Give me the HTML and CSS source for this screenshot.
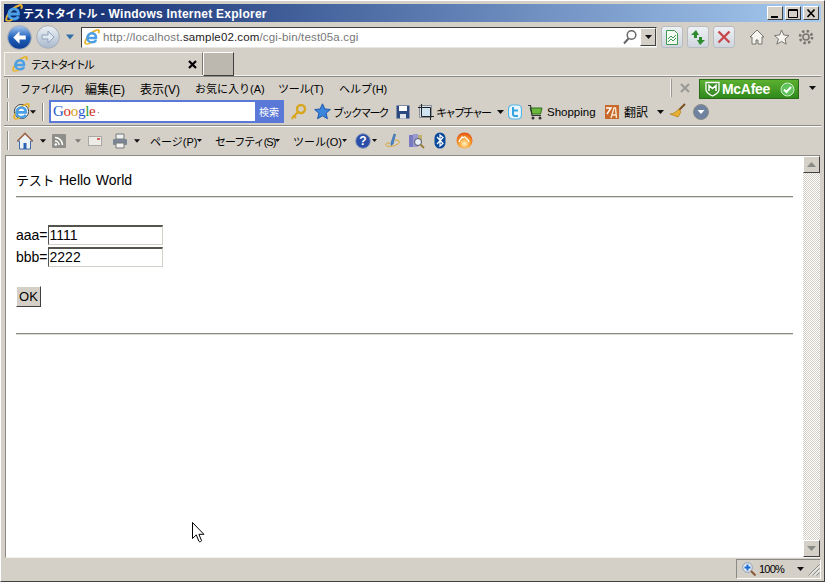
FILE: index.html
```html
<!DOCTYPE html>
<html lang="ja">
<head>
<meta charset="utf-8">
<title>テストタイトル</title>
<link rel="stylesheet" href="styles.css">
</head>
<body>
<svg class="defs" width="0" height="0">
  <defs>
    <symbol id="ie" viewBox="0 0 18 18">
      <path d="M1.500 16.500C.2 14 5 4 14.500 1.200c2.500-.6 3 1.200 1.600 3.600" fill="none" stroke="#e8b430" stroke-width="2"/>
      <path d="M4 10h9.500C13.700 6.500 11.500 4.800 9 4.800 6 4.800 3.800 7 3.800 10c0 3 2.200 5 5.200 5 2.200 0 3.800-1 4.500-2.600" fill="none" stroke="#4a9fe6" stroke-width="2.800"/>
      <path d="M1 16c1.500 1.500 4 1 6.500-.5" fill="none" stroke="#e8b430" stroke-width="1.600"/>
    </symbol>
    <symbol id="tri" viewBox="0 0 7 4"><path d="M0 0h7L3.500 4z" fill="#111"/></symbol>
  </defs>
</svg>
<div class="window">
  <header class="titlebar">
    <svg class="title-ie"><use href="#ie"/></svg>
    <span class="title-text"><span class="title-jp">テストタイトル</span> - Windows Internet Explorer</span>
    <div class="winbtns">
      <span class="winbtn"><svg width="15" height="13"><rect x="3" y="9" width="7" height="2" fill="#000"/></svg></span>
      <span class="winbtn"><svg width="15" height="13"><path d="M2.500 2.500h9v8h-9zM2 3.500h10" fill="none" stroke="#000"/></svg></span>
      <span class="winbtn"><svg width="15" height="13"><path d="M3.500 2.500l7 7.500M10.500 2.500l-7 7.500" stroke="#000" stroke-width="1.700"/></svg></span>
    </div>
  </header>

  <nav class="navrow">
    <div class="navcluster">
      <svg class="back" viewBox="0 0 24 24"><defs><linearGradient id="bk" x1="0" y1="0" x2="0" y2="1"><stop offset="0" stop-color="#a6c8f0"/><stop offset=".5" stop-color="#2062bc"/><stop offset="1" stop-color="#0c3a90"/></linearGradient></defs><circle cx="12" cy="12" r="11.300" fill="url(#bk)" stroke="#a8aeb8"/><path d="M12 6l-6 6 6 6v-4h6v-4h-6z" fill="#fff"/></svg>
      <svg class="forward" viewBox="0 0 24 24"><defs><linearGradient id="fw" x1="0" y1="0" x2="0" y2="1"><stop offset="0" stop-color="#eef2f6"/><stop offset="1" stop-color="#a8b8cc"/></linearGradient></defs><circle cx="12" cy="12" r="11.300" fill="url(#fw)" stroke="#a8aeb8"/><path d="M12 6l6 6-6 6v-4H6v-4h6z" fill="#dfe7f0" stroke="#8fa3bc"/></svg>
      <svg class="nav-drop" viewBox="0 0 10 7"><path d="M0 .5h10L5 6.500z" fill="#2f6ea8"/></svg>
    </div>
    <div class="address">
      <svg class="addr-ie"><use href="#ie"/></svg>
      <span class="url"><span class="dim">http://localhost</span>.sample02.com<span class="dim">/cgi-bin/test05a.cgi</span></span>
      <svg class="search-glass" viewBox="0 0 16 16"><circle cx="9.500" cy="6" r="4.300" fill="none" stroke="#666" stroke-width="1.500"/><path d="M6.500 9.500L2 14.500" stroke="#666" stroke-width="2"/></svg>
      <span class="addr-drop"><svg class="tri"><use href="#tri"/></svg></span>
    </div>
    <span class="navbtn"><svg width="16" height="17" viewBox="0 0 16 17"><path d="M2.500 1.500h8l3 3v11h-11z" fill="#f4fbf2" stroke="#3d9a50"/><path d="M4 10l3-3 2 2 3-3M4 13l3-3 2 2 3-3" fill="none" stroke="#3d9a50"/></svg></span>
    <span class="navbtn"><svg width="18" height="17" viewBox="0 0 18 17"><path d="M7 1L2 6h3v3h3V6h2zM11 16l5-5h-3V8h-3v3H8z" fill="#2e8a2e"/></svg></span>
    <span class="navbtn"><svg width="16" height="16" viewBox="0 0 16 16"><path d="M2.500 2.500l11 11M13.500 2.500l-11 11" stroke="#c8484c" stroke-width="2.400"/></svg></span>
    <div class="ie9tools">
      <svg width="16" height="16" viewBox="0 0 16 16"><path d="M8 1L1 8h2v7h4v-4h2v4h4V8h2z" fill="#f6f4ee" stroke="#77756e"/></svg>
      <svg width="17" height="16" viewBox="0 0 17 16"><path d="M8.500 1l2.300 5 5.200.5-4 3.500 1.200 5.200-4.700-2.800-4.700 2.800L5.500 10l-4-3.500L6.700 6z" fill="#f6f4ee" stroke="#77756e"/></svg>
      <svg width="16" height="16" viewBox="0 0 16 16"><circle cx="8" cy="8" r="3" fill="none" stroke="#77756e" stroke-width="1.500"/><circle cx="8" cy="8" r="6" fill="none" stroke="#77756e" stroke-width="2.600" stroke-dasharray="2.400 2.300"/></svg>
    </div>
  </nav>

  <div class="tabrow">
    <div class="tab">
      <svg class="tab-ie"><use href="#ie"/></svg>
      <span class="tab-title">テストタイトル</span>
      <svg class="tab-close" viewBox="0 0 9 9"><path d="M1 1l7 7M8 1L1 8" stroke="#000" stroke-width="2.200"/></svg>
    </div>
    <div class="newtab"></div>
  </div>

  <div class="bar menubar">
    <span class="grip"></span>
    <span class="item m-file">ファイル(F)</span>
    <span class="item m-edit">編集(E)</span>
    <span class="item m-view">表示(V)</span>
    <span class="item m-fav">お気に入り(A)</span>
    <span class="item m-tools">ツール(T)</span>
    <span class="item">ヘルプ(H)</span>
    <span class="spring"></span>
    <span class="grip grip-light"></span>
    <svg class="mc-x" viewBox="0 0 10 10"><path d="M1 1l8 8M9 1L1 9" stroke="#9a9a96" stroke-width="2.200"/></svg>
    <div class="mcafee">
      <svg width="15" height="16" viewBox="0 0 15 16"><path d="M1 1.500h13v7c0 3-3 5-6.500 6.500C4 13.500 1 11.500 1 8.500z" fill="#3f8f2a" stroke="#fff" stroke-width="1.300"/><path d="M4 10V4.500l3.500 3 3.500-3V10" fill="none" stroke="#fff" stroke-width="1.500"/></svg>
      <span class="mc-name">McAfee</span>
      <svg class="mc-check" width="15" height="15" viewBox="0 0 15 15"><circle cx="7.500" cy="7.500" r="6.500" fill="#5fc25a" stroke="#cfeec8"/><path d="M4 7.500l2.500 2.500L11 5" fill="none" stroke="#fff" stroke-width="2"/></svg>
    </div>
    <svg class="tri mc-drop"><use href="#tri"/></svg>
  </div>

  <div class="bar linkbar">
    <span class="grip"></span>
    <svg class="lb-ie" viewBox="0 0 18 18"><circle cx="9" cy="9" r="7.500" fill="#fff" stroke="#333"/><use href="#ie"/></svg>
    <svg class="tri tri-small"><use href="#tri"/></svg>
    <span class="sep"></span>
    <div class="google">
      <span class="g-input"><span class="g-word"><span class="gb">G</span><span class="gr">o</span><span class="gy">o</span><span class="gb">g</span><span class="gg">l</span><span class="gr">e</span></span><span class="g-dot">·</span></span>
      <span class="g-btn">検索</span>
    </div>
    <svg class="key" viewBox="0 0 17 17"><circle cx="11" cy="6" r="4" fill="none" stroke="#d8a61c" stroke-width="2.400"/><path d="M8 9l-6 6M4 13l2 2M2 15l1 1" stroke="#d8a61c" stroke-width="2.200"/></svg>
    <svg class="star" viewBox="0 0 17 17"><path d="M8.500 .8l2.300 5.200 5.500.5-4.200 3.700 1.300 5.500-4.900-2.900-4.900 2.900 1.300-5.500L.7 6.500 6.200 6z" fill="#3a86dc" stroke="#1c55a8"/></svg>
    <span class="item l-book">ブックマーク</span>
    <svg class="floppy" viewBox="0 0 14 14"><path d="M.5.500h13v13H.5z" fill="#2c4a80"/><path d="M3 1h8v5H3z" fill="#fff"/><path d="M4 9h6v4.500H4z" fill="#e0e4ea"/></svg>
    <svg class="capture" viewBox="0 0 16 16"><path d="M1.500 1.500h12v12h-12z" fill="#cfe3f2" stroke="#8a8f96"/><path d="M3.500 0v12.500H16M0 3.500h12.500V16" fill="none" stroke="#222"/></svg>
    <span class="item l-cap">キャプチャー</span>
    <svg class="tri"><use href="#tri"/></svg>
    <svg class="twitter" viewBox="0 0 14 16"><rect x=".5" y="1" width="13" height="14" rx="4" fill="#eaf6fc" stroke="#55b5e8" stroke-width="1.200"/><path d="M5 3v7c0 1.500 1 2 2 2h3M5 6.500h5" fill="none" stroke="#35a5e0" stroke-width="2"/></svg>
    <svg class="cart" viewBox="0 0 16 16"><path d="M2 4h12l-1.500 6H4z" fill="#6cb83c" stroke="#2e6e1a"/><path d="M0 1.500h2.500L4 11.500h9" fill="none" stroke="#333" stroke-width="1.200"/><circle cx="5" cy="14" r="1.500" fill="#333"/><circle cx="12" cy="14" r="1.500" fill="#333"/></svg>
    <span class="item l-shop">Shopping</span>
    <svg class="transl" viewBox="0 0 14 14"><rect width="14" height="14" fill="#c8682a"/><path d="M1 3h5L2 9" fill="none" stroke="#fff" stroke-width="1.400"/><path d="M6 13l3-10h1.500l1 10M7.500 10h4" fill="none" stroke="#fbe8d0" stroke-width="1.400"/></svg>
    <span class="item l-tr">翻訳</span>
    <svg class="tri"><use href="#tri"/></svg>
    <svg class="broom" viewBox="0 0 17 17"><path d="M16 1L9 8" stroke="#7a4a1c" stroke-width="1.800"/><path d="M10 6l2 3-3 5-8-3c3 0 6-2 9-5z" fill="#e8b030" stroke="#b07a18" stroke-width=".700"/></svg>
    <svg class="round" viewBox="0 0 16 16"><circle cx="8" cy="8" r="7.500" fill="#6f83a0" stroke="#8a8a88"/><path d="M4.500 6h7L8 10z" fill="#fff"/></svg>
  </div>

  <div class="bar cmdbar">
    <span class="grip"></span>
    <svg class="c-home" viewBox="0 0 18 18"><path d="M9 1L1 9h2.500v8h11V9H17z" fill="#eef3fa" stroke="#3f6aa8"/><path d="M1.500 9L9 1.500 16.500 9" fill="none" stroke="#a06a48" stroke-width="1.600"/><path d="M7.500 11h3v6h-3z" fill="#2f62b0"/></svg>
    <svg class="tri tri-home"><use href="#tri"/></svg>
    <svg class="c-rss" viewBox="0 0 14 14"><rect width="14" height="14" rx="1" fill="#8e8e8a"/><path d="M3 3.500c4 0 7.500 3.500 7.500 7.500M3 7c2.200 0 4 1.800 4 4" fill="none" stroke="#fff" stroke-width="1.500"/><circle cx="3.800" cy="10.500" r="1.300" fill="#fff"/></svg>
    <svg class="tri tri-rss"><use href="#tri"/></svg>
    <svg class="c-mail" viewBox="0 0 14 10"><rect x=".5" y=".5" width="13" height="9" fill="#eeece6" stroke="#aaa8a2"/><rect x="9" y="2" width="3" height="2" fill="#d86060"/></svg>
    <svg class="c-print" viewBox="0 0 16 16"><path d="M4 1h8v5H4z" fill="#eef0f2" stroke="#777"/><rect x="1" y="6" width="14" height="6" rx="1" fill="#7a8694"/><path d="M4 10h8v5H4z" fill="#f4f4f2" stroke="#777"/></svg>
    <svg class="tri tri-print"><use href="#tri"/></svg>
    <span class="item c-page">ページ(P)</span>
    <svg class="tri tri-tiny"><use href="#tri"/></svg>
    <span class="item c-safe">セーフティ(S)</span>
    <svg class="tri tri-tiny"><use href="#tri"/></svg>
    <span class="item c-tools">ツール(O)</span>
    <svg class="tri tri-tiny"><use href="#tri"/></svg>
    <svg class="c-help" viewBox="0 0 16 16"><circle cx="8" cy="8" r="7.300" fill="#2b4fa8" stroke="#8a9ab8"/><text x="8" y="12" class="help-q">?</text></svg>
    <svg class="tri tri-help"><use href="#tri"/></svg>
    <svg class="c-pen" viewBox="0 0 16 16"><path d="M9 1l1.500.5L8 11l-2 1.500V10z" fill="#4a8ad0" stroke="#2a5a9a" stroke-width=".600"/><path d="M10 7c4 0 6 2 3 4-3 2-8 3-11 2s-1-3 3-3" fill="none" stroke="#d8a838"/></svg>
    <svg class="c-research" viewBox="0 0 17 17"><rect x="1" y="3" width="4" height="12" fill="#7a7ac0"/><rect x="5" y="2" width="5" height="13" fill="#9a9ad0"/><rect x="10" y="3" width="4" height="6" fill="#c0b070"/><circle cx="10" cy="10" r="3.500" fill="#e8f0f8" stroke="#556"/><path d="M12.500 12.500L16 16" stroke="#a08040" stroke-width="2"/></svg>
    <svg class="c-bt" viewBox="0 0 12 17"><rect x=".5" y=".5" width="11" height="16" rx="5.500" fill="#0a4a9a"/><path d="M3 5l6 6.500-3 2.500V3l3 2.500L3 12" fill="none" stroke="#fff" stroke-width="1.200"/></svg>
    <svg class="c-flame" viewBox="0 0 17 17"><defs><radialGradient id="fl" cx=".5" cy=".7" r=".7"><stop offset="0" stop-color="#fff4c0"/><stop offset=".5" stop-color="#f8a030"/><stop offset="1" stop-color="#e04a10"/></radialGradient></defs><circle cx="8.500" cy="8.500" r="8" fill="url(#fl)"/><path d="M3 10c1-4 2-2 3-5 1 2 2-1 3 0 1 2 3 1 4 5" fill="none" stroke="#fff" stroke-width="1.200"/></svg>
  </div>

  <main class="viewport">
    <div class="page">
      <div class="heading"><span class="jp-big">テスト</span> Hello World</div>
      <hr class="rule">
      <div class="field"><label>aaa=</label><input class="input" value="1111"></div>
      <div class="field"><label>bbb=</label><input class="input" value="2222"></div>
      <button class="okbtn">OK</button>
      <hr class="rule rule-end">
      <svg class="pointer" width="14" height="21" viewBox="0 0 14 21"><path d="M.5.500v16l3.800-3.600 2.600 6.400c.4 1 3 .3 2.500-1l-2.500-6h5z" fill="#fff" stroke="#000"/></svg>
    </div>
    <div class="scrollbar">
      <span class="sb-btn"><svg width="9" height="5"><path d="M0 5h9L4.500 0z" fill="#8a8a86"/></svg></span>
      <span class="sb-track"></span>
      <span class="sb-btn"><svg width="9" height="5"><path d="M0 0h9L4.500 5z" fill="#8a8a86"/></svg></span>
    </div>
  </main>

  <footer class="status">
    <div class="zoombox">
      <svg class="z-glass" viewBox="0 0 14 14"><circle cx="5.500" cy="5.500" r="4.800" fill="#e8eef6" stroke="#8a9ab0"/><path d="M5.500 2.500v6M2.500 5.500h6" stroke="#1a6ad0" stroke-width="2"/><path d="M9 9l4.500 4.500" stroke="#8a5a38" stroke-width="2"/></svg>
      <span class="z-text">100%</span>
      <svg class="tri z-tri"><use href="#tri"/></svg>
      <svg class="resize" width="13" height="13" viewBox="0 0 13 13"><path d="M12.500 1.500l-11 11M12.500 5.500l-7 7M12.500 9.500l-3 3" stroke="#8a8a86"/><path d="M12.500 3l-9.500 9.500M12.500 7l-5.500 5.500" stroke="#fff"/></svg>
    </div>
  </footer>
</div>
</body>
</html>
```

FILE: styles.css
```css
* { box-sizing: border-box; }
html, body { margin: 0; padding: 0; }
body { width: 825px; height: 582px; overflow: hidden; background: #d4d0c8; }
.defs { position: absolute; }
svg { display: block; flex: none; }

.window {
  width: 825px;
  height: 582px;
  display: flex;
  flex-direction: column;
  background: #d4d0c8;
  border-top: 1px solid #fff;
  border-left: 1px solid #fff;
  border-right: 1px solid #404040;
  border-bottom: 1px solid #404040;
  padding: 3px;
  font-family: "Liberation Sans", "Noto Sans CJK JP", sans-serif;
  font-size: 11px;
  color: #000;
}

/* title bar */
.titlebar {
  height: 18px;
  flex: none;
  display: flex;
  align-items: center;
  background: linear-gradient(90deg, #0a246a 0%, #a6caf0 100%);
}
.title-ie { width: 18px; height: 18px; margin-left: 1px; }
.title-text { color: #fff; font-weight: 700; font-size: 12px; letter-spacing: .25px; white-space: nowrap; }
.title-jp { font-size: 11px; letter-spacing: -.4px; }
.winbtns { margin-left: auto; display: flex; margin-right: 2px; gap: 2px; }
.winbtn {
  width: 16px; height: 14px;
  background: #d4d0c8;
  border: 1px solid;
  border-color: #fff #404040 #404040 #fff;
  display: flex; align-items: center; justify-content: center;
}

/* navigation */
.navrow { height: 28px; flex: none; display: flex; align-items: center; padding-top: 2px; }
.navcluster { display: flex; align-items: center; width: 77px; padding-left: 3px; }
.back { width: 25px; height: 25px; }
.forward { width: 24px; height: 24px; margin-left: 4px; }
.nav-drop { width: 8px; height: 6px; margin-left: 6px; }
.address {
  width: 576px; height: 21px;
  display: flex; align-items: center;
  background: #fff;
  border: 1px solid;
  border-color: #404040 #e8e6e0 #e8e6e0 #404040;
  outline: 1px solid #d4d0c8;
}
.addr-ie { width: 16px; height: 16px; margin-left: 2px; }
.url { margin-left: 3px; font-size: 11.500px; color: #222; letter-spacing: .15px; white-space: nowrap; }
.dim { color: #777; }
.search-glass { width: 16px; height: 16px; margin-left: auto; }
.addr-drop {
  width: 16px; height: 18px; margin-left: 2px;
  background: #d4d0c8;
  border: 1px solid;
  border-color: #fff #404040 #404040 #fff;
  display: flex; align-items: center; justify-content: center;
}
.navbtn {
  width: 22px; height: 22px; margin-left: 4px;
  border: 1px solid #b8bcc0; border-radius: 3px;
  background: linear-gradient(#eef1f4, #cfd6de);
  display: flex; align-items: center; justify-content: center;
}
.ie9tools { display: flex; align-items: center; gap: 8px; margin-left: 14px; }

/* tabs */
.tabrow { height: 26px; flex: none; display: flex; align-items: flex-start; padding-top: 2px; border-bottom: 1px solid #f4f2ee; box-shadow: 0 1px 0 #8c8a84; }
.tab {
  width: 199px; height: 23px;
  display: flex; align-items: center;
  border-top: 1px solid #f4f2ee;
  border-left: 1px solid #f4f2ee;
  border-right: 1px solid #77756e;
  background: #d4d0c8;
}
.tab-ie { width: 16px; height: 16px; margin-left: 7px; }
.tab-title { margin-left: 3px; letter-spacing: -2.200px; }
.tab-close { width: 9px; height: 9px; margin-left: auto; margin-right: 5px; }
.newtab {
  width: 31px; height: 24px;
  background: #bcb8b0;
  border: 1px solid;
  border-color: #fff #404040 #404040 #fff;
}

/* toolbars */
.bar { flex: none; display: flex; align-items: center; white-space: nowrap; }
.menubar { height: 24px; }
.linkbar { height: 26px; padding-bottom: 2px; border-bottom: 1px solid #8c8a84; box-shadow: 0 1px 0 #fff; }
.cmdbar { height: 29px; }
.grip { width: 2px; height: 19px; margin-left: 3px; border-left: 1px solid #8c8a84; background: #fff; }
.grip-light { margin-left: 0; background: #f4f2ee; height: 18px; border-left: 0; border-right: 1px solid #9a9890; }
.item { display: block; flex: none; }
.m-file { width: 65px; margin-left: 11px; letter-spacing: -.8px; }
.m-edit, .m-view { width: 55px; font-size: 12px; }
.m-fav { width: 83px; }
.m-tools { width: 61px; letter-spacing: -.3px; }
.spring { flex: 1; }
.mc-x { width: 10px; height: 10px; margin-left: 8px; }
.mcafee {
  width: 100px; height: 20px; margin-left: 9px; margin-top: 2px;
  background: linear-gradient(#5cb030, #2f8a1c);
  border: 1px solid #2a6a18;
  display: flex; align-items: center; padding-left: 5px;
}
.mc-name { color: #fff; font-weight: 700; font-size: 14px; margin-left: 2px; letter-spacing: -.3px; font-family: "Liberation Sans", sans-serif; }
.mc-check { margin-left: auto; margin-right: 3px; }
.tri { width: 7px; height: 4px; }
.mc-drop { margin-left: 10px; margin-right: 5px; }

.lb-ie { width: 17px; height: 17px; margin-left: 4px; }
.tri-small { width: 6px; }
.sep { width: 2px; height: 18px; margin-left: 6px; border-left: 1px solid #8c8a84; background: #fff; }
.google {
  width: 235px; height: 23px; margin-left: 5px;
  display: flex;
  background: #fff;
  border: 2px solid #5a78d8;
  border-right-width: 1px;
}
.g-input { flex: 1; display: flex; align-items: center; padding-left: 2px; }
.g-word { font-family: "Liberation Serif", serif; font-size: 15px; letter-spacing: -.3px; }
.gb { color: #2a5ad0; } .gr { color: #d03020; } .gy { color: #d8a010; } .gg { color: #2a9a3a; }
.g-dot { color: #888; margin-left: 1px; }
.g-btn {
  width: 28px; background: #5a78d8; color: #fff; font-size: 10px;
  display: flex; align-items: center; justify-content: center;
}
.key { width: 17px; height: 17px; margin-left: 6px; }
.star { width: 17px; height: 17px; margin-left: 7px; }
.l-book { width: 63px; margin-left: 2px; letter-spacing: -1.900px; }
.floppy { width: 14px; height: 14px; }
.capture { width: 16px; height: 16px; margin-left: 8px; }
.l-cap { width: 61px; margin-left: 2px; letter-spacing: -2px; }
.twitter { width: 14px; height: 16px; margin-left: 4px; }
.cart { width: 16px; height: 16px; margin-left: 6px; }
.l-shop { width: 58px; margin-left: 3px; font-size: 11.500px; }
.transl { width: 14px; height: 14px; }
.l-tr { width: 33px; margin-left: 5px; font-size: 12px; }
.broom { width: 17px; height: 17px; margin-left: 5px; }
.round { width: 16px; height: 16px; margin-left: 7px; }

.c-home { width: 18px; height: 18px; margin-left: 7px; }
.tri-home { margin-left: 6px; width: 6px; }
.c-rss { width: 14px; height: 14px; margin-left: 6px; }
.tri-rss { margin-left: 9px; width: 6px; opacity: .45; }
.c-mail { width: 14px; height: 10px; margin-left: 7px; }
.c-print { width: 16px; height: 16px; margin-left: 10px; }
.tri-print { margin-left: 6px; width: 6px; }
.c-page { width: 47px; margin-left: 10px; }
.tri-tiny { width: 5px; height: 3px; margin-right: 13px; }
.c-safe { width: 60px; letter-spacing: -1px; }
.c-tools { width: 49px; }
.c-tools + .tri-tiny { margin-right: 8px; }
.c-help { width: 16px; height: 16px; }
.help-q { font: 700 12px "Liberation Sans", sans-serif; fill: #fff; text-anchor: middle; }
.tri-help { width: 5px; height: 3px; margin-left: 1px; margin-right: 8px; }
.c-pen { width: 16px; height: 16px; }
.c-research { width: 17px; height: 17px; margin-left: 7px; }
.c-bt { width: 12px; height: 17px; margin-left: 9px; }
.c-flame { width: 17px; height: 17px; margin-left: 10px; }

/* content */
.viewport {
  flex: none;
  height: 403px;
  display: flex;
  margin-left: 1px;
  margin-right: 1px;
  border-top: 1px solid #8c8a84;
  border-bottom: 1px solid #f4f2ee;
  border-left: 1px solid #8c8a84;
  background: #fff;
}
.page { position: relative; flex: 1; padding: 14px 10px 0 10px; font-size: 14px; }
.heading { height: 26px; font-size: 14px; word-spacing: 1px; }
.jp-big { font-size: 13px; letter-spacing: -.3px; }
.rule { margin: 0 0 26px 0; height: 2px; border: 0; border-top: 1px solid #8c8a84; border-bottom: 1px solid #dedcd8; }
.field { height: 22px; display: flex; align-items: center; }
.input {
  width: 115px; height: 20px;
  border-style: solid;
  border-color: #55534e #d4d0c8 #d4d0c8 #55534e;
  border-width: 2px 1px 1px 1px;
  padding: 0 0 1px 1px;
  font: 14px "Liberation Sans", sans-serif;
  color: #000;
  background: #fff;
  outline: 0;
}
.okbtn {
  display: block;
  width: 25px; height: 21px;
  margin: 18px 0 26px 0;
  padding: 0;
  font: 13px "Liberation Sans", sans-serif;
  color: #000;
  background: #d4d0c8;
  border: 1px solid;
  border-color: #fff #404040 #404040 #fff;
}
.rule-end { margin-bottom: 0; }
.pointer { position: absolute; left: 186px; top: 366px; }
.scrollbar {
  flex: none; width: 17px;
  display: flex; flex-direction: column;
  background-image: repeating-conic-gradient(#d4d0c8 0 25%, #fff 0 50%);
  background-size: 2px 2px;
}
.sb-btn {
  height: 17px; flex: none;
  background: #d4d0c8;
  border: 1px solid;
  border-color: #fff #404040 #404040 #fff;
  display: flex; align-items: center; justify-content: center;
}
.sb-track { flex: 1; }

/* status */
.status { flex: 1; display: flex; justify-content: flex-end; padding-top: 1px; }
.zoombox {
  width: 85px; height: 20px;
  display: flex; align-items: center;
  border-left: 1px solid #8c8a84;
  border-top: 1px solid #8c8a84;
  border-bottom: 1px solid #fff;
  border-right: 1px solid #fff;
  padding-left: 5px;
  font-size: 11px;
}
.z-glass { width: 14px; height: 14px; }
.z-text { margin-left: 3px; letter-spacing: -.8px; }
.z-tri { margin-left: 13px; }
.resize { margin-left: auto; }
```
